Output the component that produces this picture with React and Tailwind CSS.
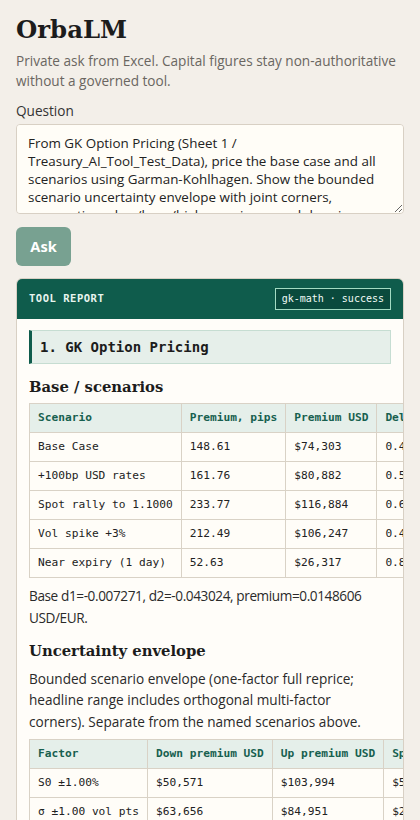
import React from "react";

const sans = { fontFamily: '"Open Sans", "Noto Sans", sans-serif' };
const serif = { fontFamily: '"DejaVu Serif", Georgia, serif' };
const mono = { fontFamily: '"DejaVu Sans Mono", "Liberation Mono", monospace' };

const scenarios = [
  ["Base Case", "148.61", "$74,303", "0.4931"],
  ["+100bp USD rates", "161.76", "$80,882", "0.5318"],
  ["Spot rally to 1.1000", "233.77", "$116,884", "0.6472"],
  ["Vol spike +3%", "212.49", "$106,247", "0.4967"],
  ["Near expiry (1 day)", "52.63", "$26,317", "0.8412"],
];

const envelope = [
  ["S0 ±1.00%", "$50,571", "$103,994", "$53,423"],
  ["σ ±1.00 vol pts", "$63,656", "$84,951", "$21,295"],
  ["r_d ±25bp", "$72,910", "$75,702", "$2,792"],
];

function Table({ head, rows }) {
  return (
    <table className="border-collapse whitespace-nowrap" style={mono}>
      <thead>
        <tr>
          {head.map((h) => (
            <th
              key={h}
              className="border border-[#d9d2c6] bg-[#e5efea] px-2 py-[6px] text-left text-[11.2px] font-bold leading-[16px] text-[#17604f]"
            >
              {h}
            </th>
          ))}
        </tr>
      </thead>
      <tbody>
        {rows.map((r, i) => (
          <tr key={i}>
            {r.map((c, j) => (
              <td
                key={j}
                className="border border-[#d9d2c6] bg-[#fffdf8] px-2 py-[6px] text-[11.2px] leading-[16px] text-[#222]"
              >
                {c}
              </td>
            ))}
          </tr>
        ))}
      </tbody>
    </table>
  );
}

export default function App() {
  return (
    <div className="min-h-[820px] bg-[#f3efe9] px-4 pt-[14px] pb-8" style={sans}>
      <h1 className="text-[24.4px] font-bold leading-[32px] text-[#1c1c1c]" style={serif}>
        OrbaLM
      </h1>
      <p className="mt-[5px] text-[13.6px] leading-[20px] text-[#6a6661]">
        Private ask from Excel. Capital figures stay non-authoritative without a governed tool.
      </p>
      <div className="mt-[11px] text-[13.6px] leading-[18px] text-[#333]">Question</div>
      <textarea
        className="mt-[4px] block h-[90px] w-full rounded-[4px] border border-[#d8d0c4] bg-[#fffdf7] px-[11px] py-[9px] text-[13.4px] leading-[18px] text-[#222] outline-none"
        style={sans}
        defaultValue="From GK Option Pricing (Sheet 1 / Treasury_AI_Tool_Test_Data), price the base case and all scenarios using Garman-Kohlhagen. Show the bounded scenario uncertainty envelope with joint corners, assumptions, low/base/high premiums, and drop in a table."
      />
      <button className="mt-[13px] h-[39px] w-[55px] rounded-[6px] bg-[#78a191] text-[14.6px] font-bold text-white">
        Ask
      </button>
      <div className="mt-[12px] overflow-hidden rounded-[6px] border border-[#d8d0c4] bg-[#fffdf9]">
        <div className="flex h-[40px] items-center justify-between bg-[#0f5c4c] px-3">
          <span className="text-[10.5px] font-bold tracking-[0.05em] text-[#e8f5ef]" style={mono}>
            TOOL REPORT
          </span>
          <span
            className="border border-[#a3dbc3] bg-[#0a4a3d] px-[6px] py-[3px] text-[10px] leading-[14px] text-[#f1faf6]"
            style={mono}
          >
            gk-math · success
          </span>
        </div>
        <div className="px-3 pt-[11px] pb-6">
          <div
            className="flex h-[34px] items-center border border-l-[3px] border-[#c6ddd2] border-l-[#0f5c4c] bg-[#e6efea] pl-[8px] text-[14px] font-bold text-[#1c1c1c]"
            style={mono}
          >
            1. GK Option Pricing
          </div>
          <h2 className="mt-[12px] text-[14.8px] font-bold leading-[22px] text-[#1c1c1c]" style={serif}>
            Base / scenarios
          </h2>
          <div className="mt-[5px]">
            <Table head={["Scenario", "Premium, pips", "Premium USD", "Delta"]} rows={scenarios} />
          </div>
          <p className="mt-[7px] text-[13.6px] tracking-[-0.4px] leading-[22px] text-[#2a2a2a]">
            Base d1=-0.007271, d2=-0.043024, premium=0.0148606 USD/EUR.
          </p>
          <h2 className="mt-[11px] text-[14.8px] font-bold leading-[22px] text-[#1c1c1c]" style={serif}>
            Uncertainty envelope
          </h2>
          <p className="mt-[6px] pr-[4px] text-[13.6px] leading-[21.3px] text-[#2a2a2a]">
            Bounded scenario envelope (one-factor full reprice; headline range includes orthogonal multi-factor corners). Separate from the named scenarios above.
          </p>
          <div className="mt-[7px]">
            <Table head={["Factor", "Down premium USD", "Up premium USD", "Spread USD"]} rows={envelope} />
          </div>
        </div>
      </div>
    </div>
  );
}
